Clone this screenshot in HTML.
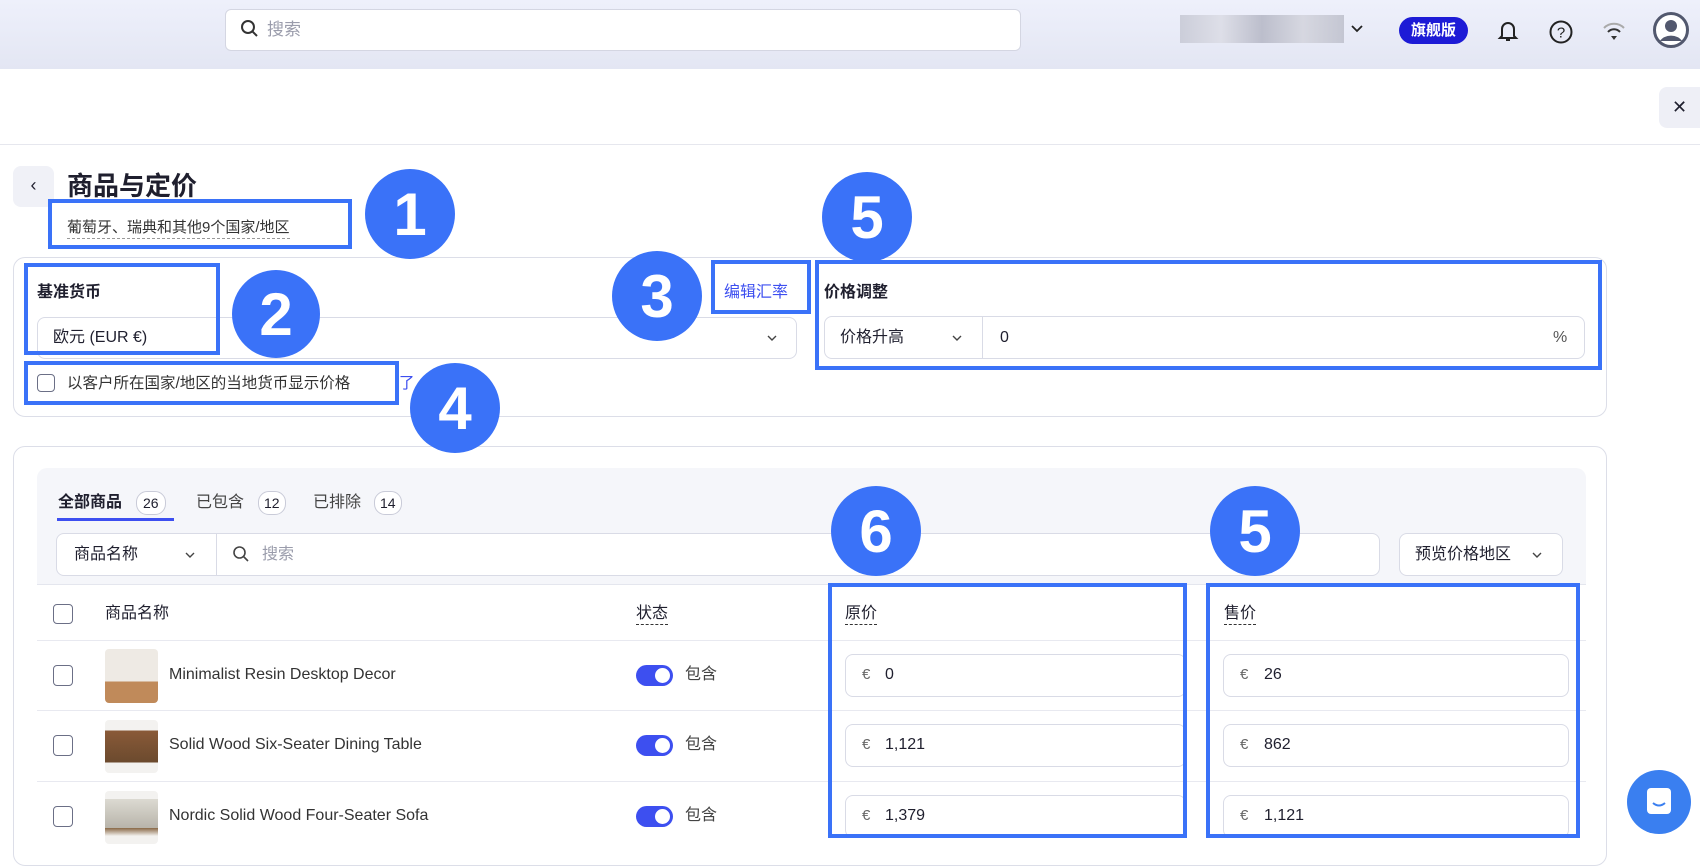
<!DOCTYPE html>
<html><head><meta charset="utf-8"><style>
*{box-sizing:border-box;margin:0;padding:0}
body{width:1700px;height:848px;overflow:hidden;background:#fff;font-family:"Liberation Sans","Noto Sans CJK SC",sans-serif;color:#1f1f2e;position:relative}
.a{position:absolute}
.hb{border:4px solid #3a72f8}
.c{position:absolute;border-radius:50%;background:#3a72f8;color:#fff;font:bold 60px "Liberation Sans",sans-serif;display:flex;align-items:center;justify-content:center}
.inp{position:absolute;border:1px solid #d9dbe6;border-radius:8px;background:#fff}
.chk{position:absolute;width:18px;height:18px;border:1.5px solid #6b6f86;border-radius:4px;background:#fff}
.tog{position:absolute;width:37px;height:21px;border-radius:11px;background:#3d4ff0}
.tog:after{content:"";position:absolute;right:3px;top:3px;width:15px;height:15px;border-radius:50%;background:#fff}
.t{position:absolute;white-space:nowrap;line-height:1.1}
.bd{position:absolute;font-size:14px;line-height:16px;border:1px solid #c9cbd8;border-radius:11px;padding:3px 6px;background:#fff}
</style></head><body>
<!-- header -->
<div class="a" style="left:0;top:0;width:1700px;height:69px;background:linear-gradient(#eef0fb,#e3e6f3)"></div>
<div class="inp" style="left:225px;top:9px;width:796px;height:42px;border-radius:6px;border-color:#d4d6e2"></div>
<svg class="a" style="left:240px;top:19px" width="20" height="20" viewBox="0 0 20 20"><circle cx="8" cy="8" r="6" fill="none" stroke="#333" stroke-width="2"/><path d="M12.5 12.5L17 17" stroke="#333" stroke-width="2"/></svg>
<div class="t" style="left:267px;top:21px;font-size:17px;color:#9a9cab">搜索</div>
<div class="a" style="left:1180px;top:15px;width:164px;height:28px;background:linear-gradient(90deg,#c8cad6,#dcdde6,#b7b9c7,#d4d5de,#c0c2ce);opacity:.9"></div>
<svg class="a" style="left:1350px;top:24px" width="14" height="10"><path d="M2 2l5 5 5-5" fill="none" stroke="#222" stroke-width="1.8"/></svg>
<div class="a" style="left:1399px;top:17px;width:69px;height:27px;border-radius:14px;background:#1d1bd6;color:#fff;font-size:15px;font-weight:bold;text-align:center;line-height:27px">旗舰版</div>
<svg class="a" style="left:1496px;top:18px" width="24" height="26" viewBox="0 0 24 26"><path d="M6 18V11a6 6 0 0112 0v7l2 2H4z" fill="none" stroke="#222" stroke-width="2"/><path d="M10 22h4" stroke="#222" stroke-width="2"/></svg>
<svg class="a" style="left:1548px;top:19px" width="26" height="26"><circle cx="13" cy="13" r="10.5" fill="none" stroke="#222" stroke-width="2"/><text x="13" y="18.5" font-size="15" text-anchor="middle" font-family="Liberation Sans" fill="#222">?</text></svg>
<svg class="a" style="left:1601px;top:20px" width="26" height="22"><path d="M3 8a14 14 0 0120 0" fill="none" stroke="#aaa" stroke-width="2"/><path d="M7 12a8 8 0 0112 0" fill="none" stroke="#333" stroke-width="2"/><path d="M10 16l3 4 3-4z" fill="#333"/></svg>
<svg class="a" style="left:1652px;top:11px" width="38" height="38"><circle cx="19" cy="19" r="16.5" fill="#fff" stroke="#52586e" stroke-width="3"/><circle cx="19" cy="15" r="6" fill="#52586e"/><path d="M8 30a12 9 0 0122 0" fill="#52586e"/></svg>
<!-- second bar -->
<div class="a" style="left:0;top:144px;width:1700px;height:1px;background:#e6e7ee"></div>
<div class="a" style="left:1659px;top:87px;width:41px;height:41px;border-radius:8px 0 0 8px;background:#eeeff6;font-size:18px;text-align:center;line-height:41px">✕</div>
<!-- title -->
<div class="a" style="left:13px;top:166px;width:41px;height:41px;border-radius:8px;background:#f0f1f7;font-size:18px;text-align:center;line-height:39px">‹</div>
<div class="t" style="left:67px;top:172px;font-size:26px;font-weight:bold;line-height:28px">商品与定价</div>
<div class="t" style="left:67px;top:218px;font-size:15px;color:#333;border-bottom:1px dashed #999;line-height:20px">葡萄牙、瑞典和其他9个国家/地区</div>
<div class="a hb" style="left:48px;top:199px;width:304px;height:50px"></div>
<!-- card 1 -->
<div class="a" style="left:13px;top:257px;width:1594px;height:160px;border:1px solid #dcdee8;border-radius:12px"></div>
<div class="t" style="left:37px;top:284px;font-size:16px;font-weight:bold">基准货币</div>
<div class="inp" style="left:37px;top:317px;width:760px;height:42px"></div>
<div class="t" style="left:53px;top:329px;font-size:16px">欧元 (EUR €)</div>
<svg class="a" style="left:766px;top:334px" width="12" height="8"><path d="M2 2l4 4 4-4" fill="none" stroke="#444" stroke-width="1.4"/></svg>
<div class="t" style="left:724px;top:284px;font-size:16px;color:#3d4ff0">编辑汇率</div>
<div class="t" style="left:824px;top:284px;font-size:16px;font-weight:bold">价格调整</div>
<div class="inp" style="left:824px;top:316px;width:761px;height:43px"></div>
<div class="a" style="left:982px;top:317px;width:1px;height:41px;background:#d9dbe6"></div>
<div class="t" style="left:840px;top:329px;font-size:16px">价格升高</div>
<svg class="a" style="left:951px;top:334px" width="12" height="8"><path d="M2 2l4 4 4-4" fill="none" stroke="#444" stroke-width="1.4"/></svg>
<div class="t" style="left:1000px;top:329px;font-size:16px">0</div>
<div class="t" style="left:1553px;top:329px;font-size:16px;color:#555">%</div>
<div class="chk" style="left:37px;top:374px"></div>
<div class="t" style="left:67px;top:375px;font-size:15.5px;color:#333">以客户所在国家/地区的当地货币显示价格</div>
<div class="t" style="left:399px;top:375px;font-size:15.5px;color:#3d4ff0">了</div>
<div class="a hb" style="left:24px;top:263px;width:196px;height:92px"></div>
<div class="a hb" style="left:711px;top:260px;width:100px;height:54px"></div>
<div class="a hb" style="left:815px;top:260px;width:787px;height:110px"></div>
<div class="a hb" style="left:24px;top:361px;width:375px;height:44px"></div>
<!-- card 2 -->
<div class="a" style="left:13px;top:446px;width:1594px;height:420px;border:1px solid #dcdee8;border-radius:12px"></div>
<div class="a" style="left:37px;top:468px;width:1549px;height:117px;background:#f5f6fa;border-radius:10px 10px 0 0;border-bottom:1px solid #e4e6ee"></div>
<div class="t" style="left:58px;top:494px;font-size:16px;font-weight:bold">全部商品</div>
<div class="bd" style="left:136px;top:491px">26</div>
<div class="a" style="left:57px;top:518px;width:117px;height:3px;background:#3d4ff0"></div>
<div class="t" style="left:196px;top:494px;font-size:16px;color:#444">已包含</div>
<div class="bd" style="left:258px;top:491px;padding:3px 5px">12</div>
<div class="t" style="left:313px;top:494px;font-size:16px;color:#444">已排除</div>
<div class="bd" style="left:374px;top:491px;padding:3px 5px">14</div>
<div class="inp" style="left:56px;top:533px;width:1324px;height:43px"></div>
<div class="a" style="left:216px;top:534px;width:1px;height:41px;background:#d9dbe6"></div>
<div class="t" style="left:74px;top:546px;font-size:16px">商品名称</div>
<svg class="a" style="left:184px;top:551px" width="12" height="8"><path d="M2 2l4 4 4-4" fill="none" stroke="#444" stroke-width="1.4"/></svg>
<svg class="a" style="left:232px;top:545px" width="18" height="18"><circle cx="7.5" cy="7.5" r="5.5" fill="none" stroke="#444" stroke-width="1.6"/><path d="M11.5 11.5L16 16" stroke="#444" stroke-width="1.6"/></svg>
<div class="t" style="left:262px;top:546px;font-size:16px;color:#9a9cab">搜索</div>
<div class="inp" style="left:1399px;top:533px;width:164px;height:43px"></div>
<div class="t" style="left:1415px;top:546px;font-size:16px">预览价格地区</div>
<svg class="a" style="left:1531px;top:551px" width="12" height="8"><path d="M2 2l4 4 4-4" fill="none" stroke="#444" stroke-width="1.4"/></svg>
<!-- table header -->
<div class="chk" style="left:53px;top:604px;width:20px;height:20px"></div>
<div class="t" style="left:105px;top:605px;font-size:16px">商品名称</div>
<div class="t" style="left:636px;top:604px;font-size:16px;border-bottom:1px dashed #333;line-height:20px">状态</div>
<div class="t" style="left:845px;top:604px;font-size:16px;border-bottom:1px dashed #333;line-height:20px">原价</div>
<div class="t" style="left:1224px;top:604px;font-size:16px;border-bottom:1px dashed #333;line-height:20px">售价</div>
<div class="a" style="left:37px;top:640px;width:1549px;height:1px;background:#e8e9f0"></div>
<div class="a" style="left:37px;top:710px;width:1549px;height:1px;background:#e8e9f0"></div>
<div class="a" style="left:37px;top:781px;width:1549px;height:1px;background:#e8e9f0"></div>
<!-- rows -->
<div class="chk" style="left:53px;top:665px;width:20px;height:21px"></div>
<div class="a" style="left:105px;top:649px;width:53px;height:54px;border-radius:4px;background:linear-gradient(#eeeae4 60%,#c08a5a 60%)"></div>
<div class="t" style="left:169px;top:666px;font-size:16px;color:#333">Minimalist Resin Desktop Decor</div>
<div class="tog" style="left:636px;top:665px"></div><div class="t" style="left:685px;top:666px;font-size:16px;color:#444">包含</div>
<div class="inp" style="left:845px;top:654px;width:341px;height:43px"></div><div class="t" style="left:862px;top:667px;font-size:15px;color:#666">€</div><div class="t" style="left:885px;top:666px;font-size:16px">0</div>
<div class="inp" style="left:1223px;top:654px;width:346px;height:43px"></div><div class="t" style="left:1240px;top:667px;font-size:15px;color:#666">€</div><div class="t" style="left:1264px;top:666px;font-size:16px">26</div>

<div class="chk" style="left:53px;top:735px;width:20px;height:21px"></div>
<div class="a" style="left:105px;top:720px;width:53px;height:53px;border-radius:4px;background:linear-gradient(#f3f2f0 20%,#8a5a38 20%,#6b4a2e 80%,#f3f2f0 80%)"></div>
<div class="t" style="left:169px;top:736px;font-size:16px;color:#333">Solid Wood Six-Seater Dining Table</div>
<div class="tog" style="left:636px;top:735px"></div><div class="t" style="left:685px;top:736px;font-size:16px;color:#444">包含</div>
<div class="inp" style="left:845px;top:724px;width:341px;height:43px"></div><div class="t" style="left:862px;top:737px;font-size:15px;color:#666">€</div><div class="t" style="left:885px;top:736px;font-size:16px">1,121</div>
<div class="inp" style="left:1223px;top:724px;width:346px;height:43px"></div><div class="t" style="left:1240px;top:737px;font-size:15px;color:#666">€</div><div class="t" style="left:1264px;top:736px;font-size:16px">862</div>

<div class="chk" style="left:53px;top:806px;width:20px;height:21px"></div>
<div class="a" style="left:105px;top:791px;width:53px;height:53px;border-radius:4px;background:linear-gradient(#f3f2f0 15%,#dcdad2 15%,#b8b4aa 70%,#8a6a48 70%,#f3f2f0 85%)"></div>
<div class="t" style="left:169px;top:807px;font-size:16px;color:#333">Nordic Solid Wood Four-Seater Sofa</div>
<div class="tog" style="left:636px;top:806px"></div><div class="t" style="left:685px;top:807px;font-size:16px;color:#444">包含</div>
<div class="inp" style="left:845px;top:795px;width:341px;height:43px"></div><div class="t" style="left:862px;top:808px;font-size:15px;color:#666">€</div><div class="t" style="left:885px;top:807px;font-size:16px">1,379</div>
<div class="inp" style="left:1223px;top:795px;width:346px;height:43px"></div><div class="t" style="left:1240px;top:808px;font-size:15px;color:#666">€</div><div class="t" style="left:1264px;top:807px;font-size:16px">1,121</div>

<div class="a hb" style="left:828px;top:583px;width:359px;height:255px"></div>
<div class="a hb" style="left:1206px;top:583px;width:374px;height:255px"></div>
<!-- circles -->
<div class="c" style="left:365px;top:169px;width:90px;height:90px">1</div>
<div class="c" style="left:232px;top:270px;width:88px;height:88px">2</div>
<div class="c" style="left:612px;top:251px;width:90px;height:90px">3</div>
<div class="c" style="left:410px;top:363px;width:90px;height:90px">4</div>
<div class="c" style="left:822px;top:172px;width:90px;height:90px">5</div>
<div class="c" style="left:831px;top:486px;width:90px;height:90px">6</div>
<div class="c" style="left:1210px;top:486px;width:90px;height:90px">5</div>
<!-- chat -->
<div class="a" style="left:1627px;top:770px;width:64px;height:64px;border-radius:50%;background:#3a7ff0"></div>
<svg class="a" style="left:1645px;top:786px" width="28" height="32"><rect x="2" y="2" width="24" height="26" rx="4" fill="#fff"/><path d="M8 17q6 5 12 0" fill="none" stroke="#3a7ff0" stroke-width="2"/></svg>
</body></html>
